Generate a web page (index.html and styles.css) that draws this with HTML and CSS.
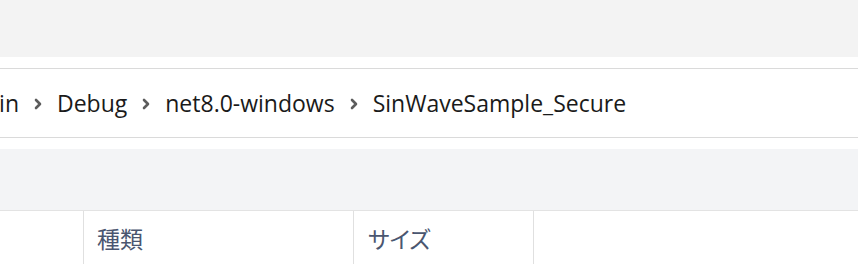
FILE: index.html
```html
<!DOCTYPE html>
<html lang="ja">
<head>
<meta charset="utf-8">
<title>Explorer</title>
<link rel="stylesheet" href="styles.css">
</head>
<body>
<div class="top"></div>
<div class="addr">
  <div class="crumbs">
    <span class="seg first">bin</span>
    <svg class="chev" viewBox="0 0 8 12" width="8" height="12"><path d="M2 2 L6 6 L2 10" fill="none" stroke="#5c5c5c" stroke-width="2.6" stroke-linecap="round" stroke-linejoin="round"/></svg>
    <span class="seg">Debug</span>
    <svg class="chev" viewBox="0 0 8 12" width="8" height="12"><path d="M2 2 L6 6 L2 10" fill="none" stroke="#5c5c5c" stroke-width="2.6" stroke-linecap="round" stroke-linejoin="round"/></svg>
    <span class="seg">net8.0-windows</span>
    <svg class="chev" viewBox="0 0 8 12" width="8" height="12"><path d="M2 2 L6 6 L2 10" fill="none" stroke="#5c5c5c" stroke-width="2.6" stroke-linecap="round" stroke-linejoin="round"/></svg>
    <span class="seg">SinWaveSample_Secure</span>
  </div>
</div>
<div class="toolbar"></div>
<div class="header">
  <div class="col c1"></div>
  <div class="col c2">種類</div>
  <div class="col c3">サイズ</div>
  <div class="col c4"></div>
</div>
</body>
</html>
```
FILE: styles.css
```css
html, body {
  margin: 0;
  padding: 0;
  background: #ffffff;
  overflow: hidden;
}
body {
  width: 858px;
  height: 278px;
  font-family: "Open Sans", "Noto Sans", "Noto Sans CJK JP", sans-serif;
}
.top {
  height: 57px;
  background: #f3f3f3;
}
.addr {
  padding: 11px 0;
  background: #ffffff;
}
.crumbs {
  height: 68px;
  border-top: 1px solid #dadada;
  border-bottom: 1px solid #dadada;
  display: flex;
  align-items: center;
  overflow: hidden;
  white-space: nowrap;
  font-size: 23px;
  color: #1a1a1a;
}
.seg {
  line-height: 1;
}
.seg.first {
  margin-left: -15px;
}
.chev {
  margin: 1px 15px 0 15px;
  flex: none;
}
.toolbar {
  height: 61px;
  background: #f3f4f6;
  border-bottom: 1px solid #e3e3e3;
}
.header {
  display: flex;
  height: 53px;
  font-family: "Noto Sans CJK JP", "Noto Sans", sans-serif;
  font-size: 23px;
  font-feature-settings: "palt";
  color: #4a5670;
}
.col {
  box-sizing: border-box;
  display: flex;
  align-items: center;
  padding-left: 13px;
  border-right: 1px solid #e0e0e0;
}
.c1 { width: 84px; }
.c2 { width: 270px; }
.c3 { width: 180px; padding-left: 14px; }
.c4 { flex: 1; border-right: none; }
```
